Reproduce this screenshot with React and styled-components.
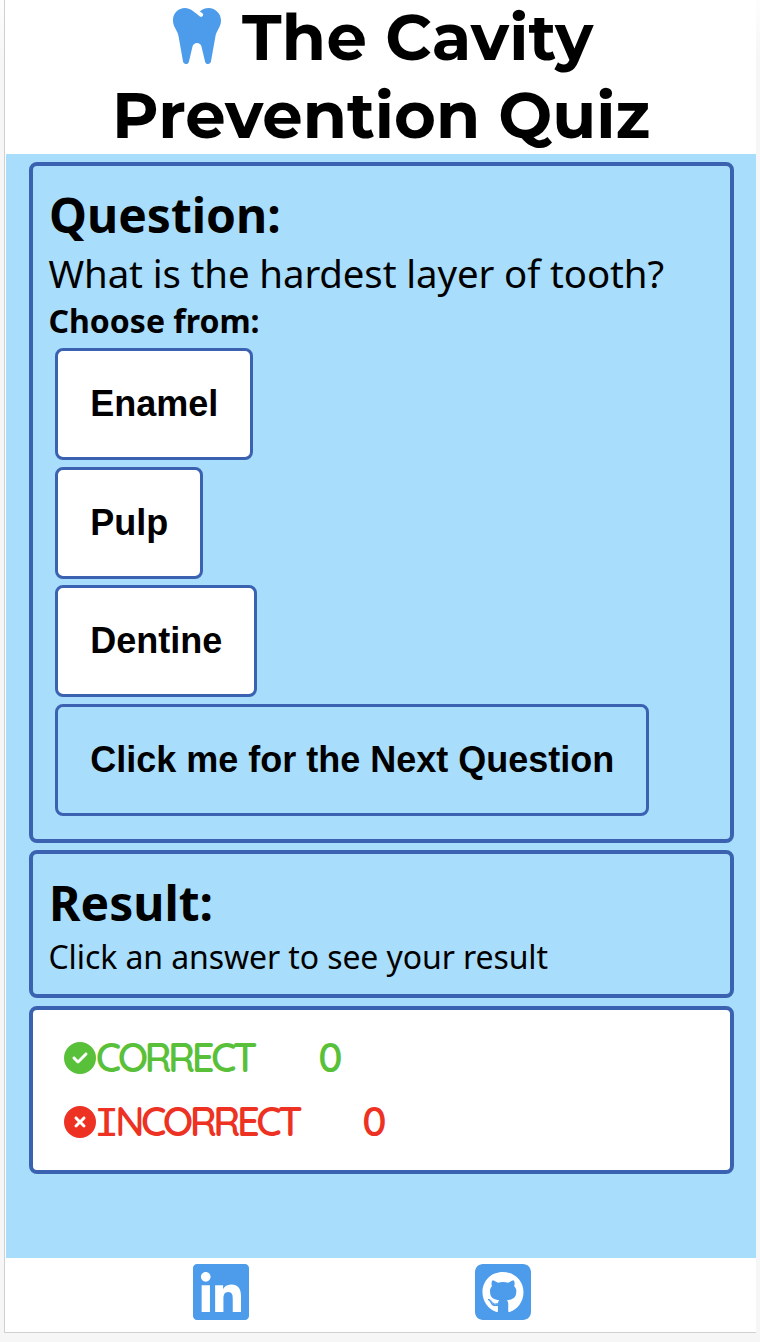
import React from "react";
import styled, { createGlobalStyle } from "styled-components";
import { FaTooth, FaCircleCheck, FaCircleXmark, FaLinkedin, FaSquareGithub } from "react-icons/fa6";

const GlobalStyle = createGlobalStyle`
  *, *::before, *::after { box-sizing: border-box; }
  html { background: #fafafa; }
  body { margin: 0; overflow: hidden; font-family: "Noto Sans", sans-serif; color: #000; }
`;

const Page = styled.div`
  width: 760px;
  height: 1342px;
  padding: 0 4px 9px;
  background: linear-gradient(to bottom, #fdfdfd, #f6f6f6 60px);
`;

const Frame = styled.div`
  height: 1333px;
  display: flex;
  flex-direction: column;
  background: #fff;
  border-left: 1px solid #d0d0d0;
  border-bottom: 1px solid #d0d0d0;
  padding-left: 1px;
`;

const Header = styled.header`
  height: 154px;
`;

const Title = styled.h1`
  margin: 0;
  font-family: Montserrat, Inter, sans-serif;
  font-weight: 700;
  font-size: 64px;
  line-height: 74px;
  white-space: nowrap;
`;

const TitleLine = styled.span`
  display: flex;
  align-items: center;
  height: ${(p) => p.$height}px;
  padding-left: ${(p) => p.$indent}px;
  letter-spacing: ${(p) => p.$tracking}px;

  svg {
    flex: none;
    width: 56px;
    height: 64px;
    margin: -3px 17.5px 0 0;
    color: #4d9beb;
  }
`;

const Main = styled.main`
  height: 1104px;
  padding: 8px 22px 0 23px;
  background: #a8ddfc;
`;

const Card = styled.section`
  height: ${(p) => p.$height}px;
  margin-bottom: ${(p) => p.$gap || 0}px;
  padding: 16px;
  border: 4px solid #3a62b0;
  border-radius: 8px;
  background: ${(p) => p.$background || "transparent"};
`;

const Heading = styled.h2`
  margin: 0;
  font-size: 48px;
  line-height: 66px;
  font-weight: 700;
`;

const Question = styled.p`
  margin: 0 0 2px -0.5px;
  font-size: 38.4px;
  line-height: 50px;
  letter-spacing: -0.12px;
  white-space: nowrap;
`;

const Prompt = styled.h3`
  margin: 0 0 0 -0.5px;
  font-size: 32px;
  line-height: 42px;
  font-weight: 700;
`;

const ResultText = styled.p`
  margin: 0 0 0 -0.5px;
  font-size: 32px;
  line-height: 42px;
  letter-spacing: -0.1px;
  white-space: nowrap;
`;

const Choices = styled.div`
  display: flex;
  flex-direction: column;
  align-items: flex-start;
  gap: 6.67px;
  padding: 6px 0 0 6px;
`;

const Choice = styled.button`
  width: ${(p) => p.$width}px;
  height: 112px;
  padding: 0 0 0 0.5px;
  border: 3px solid #3a62b0;
  border-radius: 8px;
  background: ${(p) => (p.$next ? "transparent" : "#fff")};
  color: #000;
  font: 700 36px/42px "Liberation Sans", Arial, sans-serif;
  white-space: nowrap;
`;

const Score = styled.div`
  display: flex;
  align-items: center;
  height: 64px;
  padding-left: 15.4px;
  color: ${(p) => p.$color};
  font-family: Quicksand, Montserrat, Inter, sans-serif;
  font-size: 40px;
  font-weight: 600;
  line-height: 62px;
  white-space: nowrap;

  svg {
    flex: none;
    width: 32px;
    height: 32px;
  }
`;

const ScoreLabel = styled.span`
  width: ${(p) => p.$width}px;
  margin: -2px 0 0 -0.6px;
  letter-spacing: -3.6px;
`;

const SlabCapital = styled.span`
  display: inline-block;
  width: 19.5px;
  transform: scaleX(1.25);
  transform-origin: left;
  font-family: Inter, sans-serif;
  font-size: 38.5px;
  font-weight: 400;
  font-feature-settings: "cv08" 1, "ss02" 1;
`;

const ScoreValue = styled.span`
  margin-top: -2px;
`;

const Footer = styled.footer`
  flex: 1;
  display: flex;
  align-items: flex-start;
  padding: 2px 0 0 187.4px;
  gap: 225.4px;
  color: #4d9beb;

  svg {
    width: 56px;
    height: 64px;
  }
`;

const answers = [
  { label: "Enamel", width: 198 },
  { label: "Pulp", width: 148 },
  { label: "Dentine", width: 202 },
];

export default function App() {
  return (
    <Page>
      <GlobalStyle />
      <Frame>
        <Header>
          <Title>
            <TitleLine $indent={162.5} $height={74} $tracking={0.2}>
              <FaTooth />
              The Cavity
            </TitleLine>
            <TitleLine $indent={106} $height={82} $tracking={0}>Prevention Quiz</TitleLine>
          </Title>
        </Header>
        <Main>
          <Card $height={681} $gap={7}>
            <Heading>Question:</Heading>
            <Question>What is the hardest layer of tooth?</Question>
            <Prompt>Choose from:</Prompt>
            <Choices>
              {answers.map((a) => (
                <Choice key={a.label} $width={a.width}>{a.label}</Choice>
              ))}
              <Choice $width={594} $next>Click me for the Next Question</Choice>
            </Choices>
          </Card>
          <Card $height={148} $gap={8}>
            <Heading>Result:</Heading>
            <ResultText>Click an answer to see your result</ResultText>
          </Card>
          <Card $height={168} $background="#fff">
            <Score $color="#59c03a">
              <FaCircleCheck />
              <ScoreLabel $width={222.5}>CORRECT</ScoreLabel>
              <ScoreValue>0</ScoreValue>
            </Score>
            <Score $color="#ed3223">
              <FaCircleXmark />
              <ScoreLabel $width={266.5}>
                <SlabCapital>I</SlabCapital>NCORRECT
              </ScoreLabel>
              <ScoreValue>0</ScoreValue>
            </Score>
          </Card>
        </Main>
        <Footer>
          <FaLinkedin />
          <FaSquareGithub />
        </Footer>
      </Frame>
    </Page>
  );
}
